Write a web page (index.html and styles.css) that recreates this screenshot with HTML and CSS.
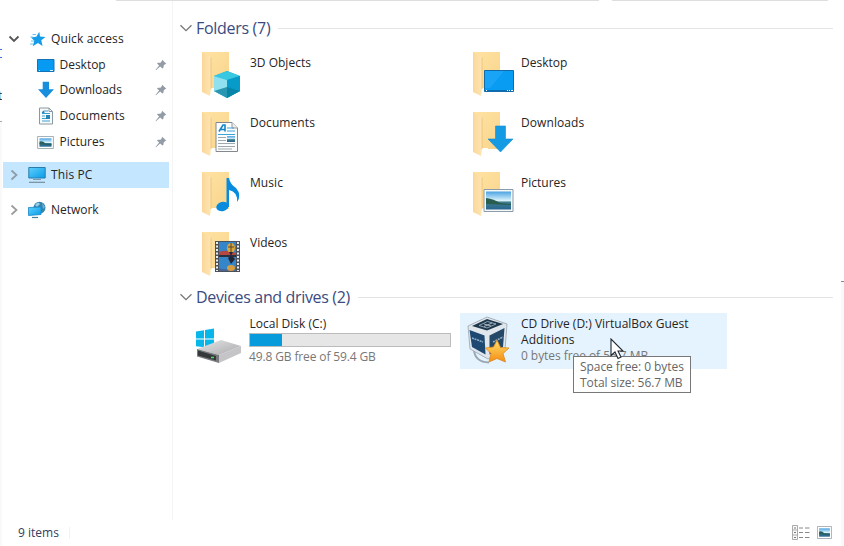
FILE: index.html
```html
<!DOCTYPE html>
<html lang="en">
<head>
<meta charset="utf-8">
<title>This PC</title>
<link rel="stylesheet" href="styles.css">
</head>
<body>
<svg class="defs" width="0" height="0" aria-hidden="true">
  <defs>
    <linearGradient id="gold" x1="0" y1="0" x2="1" y2="1"><stop offset="0" stop-color="#ffe3a4"/><stop offset="1" stop-color="#f8d48b"/></linearGradient>
    <linearGradient id="flap" x1="0" y1="0" x2="1" y2="0"><stop offset="0" stop-color="#fad798"/><stop offset="1" stop-color="#ffe5b4"/></linearGradient>
    <linearGradient id="sky" x1="0" y1="0" x2="0" y2="1"><stop offset="0" stop-color="#4ba3e3"/><stop offset=".5" stop-color="#d9f1fb"/><stop offset=".6" stop-color="#3f7c8e"/><stop offset="1" stop-color="#266492"/></linearGradient>
    <linearGradient id="screen" x1="0" y1="0" x2="1" y2="1"><stop offset="0" stop-color="#5fd0fb"/><stop offset="1" stop-color="#089bea"/></linearGradient>
    <linearGradient id="metal" x1="0" y1="0" x2="1" y2="1"><stop offset="0" stop-color="#e6e6e7"/><stop offset="1" stop-color="#aaaaae"/></linearGradient>
    <linearGradient id="star" x1="0" y1="0" x2="0" y2="1"><stop offset="0" stop-color="#ffe06a"/><stop offset="1" stop-color="#f58c13"/></linearGradient>
    <symbol id="folder" viewBox="0 0 48 48">
      <path d="M6 2H33V39H6Z" fill="url(#gold)"/>
      <path d="M14 38H21V43H14Z" fill="#fff"/>
      <path d="M6 2L15 7.500V39L14 46L6 42Z" fill="url(#flap)"/>
      <path d="M15 7.500V39" stroke="#eebf70" stroke-width=".8"/>
    </symbol>
    <symbol id="pin" viewBox="0 0 12 12"><path d="M7.200.8L11.300 4.700L10 5.300L8.700 6.400L8.300 9L7.500 9.600L5.100 7.400L1 11.300L.5 10.900L4.100 6.500L2 4.500L2.800 3.800L5.500 3.700L6.700 2.300Z" fill="#929ba6"/></symbol>
    <symbol id="picture" viewBox="0 0 18 14"><path d="M.5.500H17.500V13.500H.5Z" fill="#fff" stroke="#9ca7ae"/><path d="M2.500 2.500H15.500V11.500H2.500Z" fill="url(#sky)"/><path d="M2.500 6Q6 5 9 8L15.500 9V10L2.500 9Z" fill="#285f62"/></symbol>
  </defs>
</svg>

<div class="window">
  <div class="topline"><i></i><i></i></div>
  <div class="body">
    <nav class="sidebar">
      <div class="row root">
        <svg class="chev" viewBox="0 0 12 12"><path d="M1.500 3.500L6 8L10.500 3.500" fill="none" stroke="#555" stroke-width="1.800"/></svg>
        <svg class="ico" viewBox="0 0 18 18"><path d="M11.300 1.700L12 6.500L17.500 6.900L13.300 10.300L14.500 16L10 13L4.700 16.300L6.300 10.800L3 7.400L8.300 6.800Z" fill="#159ce8"/><path d="M4.500 4.500H8M2.500 7H5M3 11H6M2 14H5" stroke="#5abdf2" stroke-width=".9"/></svg>
        <span class="wide">Quick access</span>
      </div>
      <div class="row child">
        <svg class="ico" viewBox="0 0 18 18"><path d="M.5 3.500H17V15.500H.5Z" fill="#079af2" stroke="#1672b6"/><path d="M2 14.500H3M13 14.500H16" stroke="#d1f2ff"/></svg>
        <span>Desktop</span><svg class="pin"><use href="#pin"/></svg>
      </div>
      <div class="row child">
        <svg class="ico" viewBox="0 0 18 18"><path d="M5.700.8H12V8.200H17L9 17L1 8.200H5.700Z" fill="#178fdd"/></svg>
        <span>Downloads</span><svg class="pin"><use href="#pin"/></svg>
      </div>
      <div class="row child">
        <svg class="ico" viewBox="0 0 18 18"><path d="M2.500 1H12L15.500 4.500V17H2.500Z" fill="#f8fbfd" stroke="#8a989f"/><path d="M12 1V4.500H15.500" fill="none" stroke="#8a989f"/><path d="M8 4H11M5 6.500H13M5 9H8M5 11.500H13M5 14H13" stroke="#3c9fd4" stroke-width="1.100"/><path d="M5 5L7.500 3V6H5ZM9 8H13V12H9Z" fill="#2782b6"/></svg>
        <span class="wide">Documents</span><svg class="pin"><use href="#pin"/></svg>
      </div>
      <div class="row child">
        <svg class="ico" viewBox="0 0 18 18"><use href="#picture" y="3" width="17" height="13"/></svg>
        <span>Pictures</span><svg class="pin"><use href="#pin"/></svg>
      </div>
      <div class="row root selected">
        <svg class="chev" viewBox="0 0 12 12"><path d="M3.500 1.500L8.500 6L3.500 10.500" fill="none" stroke="#8d9ba7" stroke-width="1.700"/></svg>
        <svg class="ico" viewBox="0 0 18 18"><path d="M.8 1.500H17.200V12H.8Z" fill="url(#screen)" stroke="#287dac"/><path d="M5 13.500H13" stroke="#7d9aab"/><path d="M1 16.300H17" stroke="#778e9d" stroke-width="1.200"/></svg>
        <span class="wide">This PC</span>
      </div>
      <div class="row root network">
        <svg class="chev" viewBox="0 0 12 12"><path d="M3.500 1.500L8.500 6L3.500 10.500" fill="none" stroke="#9b9b9b" stroke-width="1.700"/></svg>
        <svg class="ico" viewBox="0 0 18 18"><circle cx="11.500" cy="6.700" r="6" fill="#3483ae"/><path d="M7 4Q10 0 12 3L9 6Z" fill="#95cee4"/><path d="M14 2L17 6L15 8Z" fill="#6cb4d2"/><path d="M.5 6.500L13 6V13.500L.5 14.500Z" fill="url(#screen)" stroke="#1688c4" stroke-width=".8"/><path d="M4 16.500H10" stroke="#467f9b" stroke-width="1.200"/></svg>
        <span>Network</span>
      </div>
    </nav>

    <main class="content">
      <h2 class="group"><svg class="down" viewBox="0 0 12 8"><path d="M.5 1.200L6 6.700L11.500 1.200" fill="none" stroke="#777" stroke-width="1.300"/></svg><span class="g1">Folders (7)</span><i></i></h2>
      <section class="folders">
        <div class="tile"><svg class="big" viewBox="0 0 48 48"><use href="#folder"/><path d="M31 21L44 26V41L31 48L18 41V26Z" fill="#16aacb"/><path d="M18 26L31 21L44 26L31 30Z" fill="#38c8e2"/><path d="M18 26L31 30V48L18 41Z" fill="#90e0ef"/><path d="M31 30L44 26V41L31 48Z" fill="#079bc9"/><path d="M18 41L31 37L44 41L31 48Z" fill="#087d9e" opacity=".75"/></svg><span>3D Objects</span></div>
        <div class="tile"><svg class="big" viewBox="0 0 48 48"><use href="#folder"/><path d="M17.500 20.500H46.500V41.500H17.500Z" fill="#089cf3" stroke="#136aa9"/><path d="M18 21H37L23 38H18Z" fill="#26aafa" opacity=".6"/><path d="M18 40.500H46" stroke="#086eb5"/><path d="M19 40.500H20M40 40.500H41M42 40.500H43M44 40.500H46" stroke="#fff"/></svg><span>Desktop</span></div>
        <div class="tile"><svg class="big" viewBox="0 0 48 48"><use href="#folder"/><path d="M20 12.500H36L41.500 18V41.500H20Z" fill="#fbfcfd" stroke="#85898c"/><path d="M36 12.500V18H41.500" fill="#eee" stroke="#999"/><path d="M23 21.500L27 15L29 15L29 21.500M24.500 19.500H29" fill="none" stroke="#1684c7" stroke-width="1.600"/><path d="M31 18H38M31 21H39M22 24.500H39" stroke="#3ca5d8" stroke-width="1.100"/><path d="M22 27.500H30M22 30.500H30M22 33.500H39M22 36.500H39M22 39H36" stroke="#a1a8ae"/><path d="M31 26H39V32H31Z" fill="url(#sky)"/></svg><span class="wide">Documents</span></div>
        <div class="tile"><svg class="big" viewBox="0 0 48 48"><use href="#folder"/><path d="M28.500 16H38.500V29H46L33.500 42L21 29H28.500Z" fill="#159be4" stroke="#178bd2" stroke-width=".6"/></svg><span class="wide">Downloads</span></div>
        <div class="tile"><svg class="big" viewBox="0 0 48 48"><use href="#folder"/><ellipse cx="26.500" cy="36.500" rx="6.300" ry="4.700" transform="rotate(-15 26.500 36.500)" fill="#078bdf"/><path d="M30.500 8H33Q34 14 40 18Q46 25 41 32Q42 22 33 20V37H30.500Z" fill="#078bdf"/></svg><span class="wide">Music</span></div>
        <div class="tile"><svg class="big" viewBox="0 0 48 48"><use href="#folder"/><path d="M17 19.500H46V41.500H17Z" fill="#f8f8f6" stroke="#8a9bab"/><path d="M19 21.500H44V39.500H19Z" fill="url(#sky)"/><path d="M19 28Q27 29 33 33L44 34V35L19 34Z" fill="#285d50"/></svg><span>Pictures</span></div>
        <div class="tile"><svg class="big" viewBox="0 0 48 48"><use href="#folder"/><path d="M19 11H44V42H19Z" fill="#4b525c"/><path d="M23 12H40V25H23ZM23 27H40V41H23Z" fill="#3585c9"/><path d="M23 22Q30 19 40 23V25H23Z" fill="#b54845"/><path d="M23 38Q30 41 40 37V41H23Z" fill="#48659a"/><ellipse cx="35" cy="18" rx="4" ry="5" fill="#d9a83b"/><path d="M32 17H38M35 13V23" stroke="#5b4230"/><path d="M23 26H40" stroke="#202833" stroke-width="1.500"/><path d="M33 22H37L35 26ZM32 28Q36 24 39 29L35 34Z" fill="#252534"/><ellipse cx="35" cy="38" rx="4" ry="3" fill="#d69e3e"/><path d="M21 12V41M42 12V41" stroke="#e9edf0" stroke-width="2" stroke-dasharray="2 1.500"/></svg><span>Videos</span></div>
      </section>

      <h2 class="group devices"><svg class="down" viewBox="0 0 12 8"><path d="M.5 1.200L6 6.700L11.500 1.200" fill="none" stroke="#777" stroke-width="1.300"/></svg><span class="g2">Devices and drives (2)</span><i></i></h2>
      <section class="drives">
        <div class="drive">
          <svg class="big" viewBox="0 0 48 48"><path d="M0 15.500L8 14.200V22.500H0ZM9 14L18 12.500V22.500H9ZM0 23.500H8V31.300L0 30.300ZM9 23.500H18V32.500L9 31.500Z" fill="#08b7ea"/><path d="M1 33L25 24L45 30L23 39Z" fill="url(#metal)"/><path d="M1 33L23 39V47L1 40.500Z" fill="#77797c"/><path d="M2 34.500L20 40V44.500L2 39.500Z" fill="#34383a"/><path d="M23 39L45 30V37L23 47Z" fill="#c5c5c8"/><path d="M15 41.500H18" stroke="#49e160" stroke-width="1.500"/></svg>
          <div class="info"><span class="name">Local Disk (C:)</span><div class="meter"><b></b></div><span class="sub tight">49.8 GB free of 59.4 GB</span></div>
        </div>
        <div class="drive hover">
          <svg class="big" viewBox="0 0 48 48"><path d="M7 34Q8 46 22 46.500" fill="none" stroke="#9aa8b6" stroke-width="2"/><path d="M1 10L20 1L40 8L38 34L21 43L3 33Z" fill="#dfe6ec" stroke="#98a3ad" stroke-width=".8"/><path d="M5 10L20 3L36 8L20 14.500Z" fill="#20384c"/><path d="M12 9.500L20.500 5.500L29 8L20 12Z" fill="none" stroke="#a9bdca" stroke-width=".8"/><path d="M17 8L24 10M17 10.500L25 7" stroke="#c2d0d9" stroke-width=".8"/><path d="M2.500 14L17.500 19.500L18.500 38.500L5 31Z" fill="#1e4772"/><path d="M22.500 19.500L37.500 12L36 31L22.500 38.500Z" fill="#244868"/><path d="M5 22L16 26M26 26L36 21" stroke="#8faec5" stroke-width="1.600" stroke-dasharray="2 .7"/><path d="M30 24L33.500 31.500L42 32L36 37.500L38.500 46L30 42.500L22 46L24 37.500L18.500 32L26.500 31Z" fill="url(#star)" stroke="#df861c" stroke-width=".8"/></svg>
          <div class="info"><span class="name">CD Drive (D:) VirtualBox Guest</span><span class="name wide">Additions</span><span class="sub bytes">0 bytes free of 56.7 MB</span></div>
        </div>
      </section>
    </main>
  </div>
  <footer class="status"><span>9 items</span><i></i>
    <svg class="details" viewBox="0 0 18 15"><path d="M.5.500H5.500V14.500H.5ZM.5 5H5.500M.5 10H5.500" fill="#fafafa" stroke="#aaa"/><path d="M2 3H4M2 7.500H4M2 12.500H4" stroke="#777"/><path d="M7 3H11M13 3H17.500M7 7.500H11M13 7.500H17.500M7 12.500H11M13 12.500H17.500" stroke="#888"/></svg>
    <svg class="large" viewBox="0 0 18 14" preserveAspectRatio="none"><use href="#picture"/></svg>
  </footer>
  <div class="edge left"></div><div class="edge right"></div>
  <div class="peek blue"></div><div class="peek dark">t</div>
  <div class="tooltip"><span>Space free: 0 bytes</span><span>Total size: 56.7 MB</span></div>
  <svg class="cursor" viewBox="0 0 14 22"><path d="M1 1V17.500L5 14L8 20.500L11 19L8 13H13Z" fill="#fff" stroke="#202830" stroke-width="1.100"/></svg>
</div>
</body>
</html>
```
FILE: styles.css
```css
* { box-sizing: border-box; }
body { margin: 0; background: #fff; font: 12px/16px "Open Sans", "Noto Sans", sans-serif; color: #252525; overflow: hidden; }
span { white-space: nowrap; }
svg { display: block; flex: none; }
.defs { position: absolute; }
.window { position: relative; width: 844px; height: 546px; display: flex; flex-direction: column; overflow: hidden; }
.topline { height: 1px; display: flex; gap: 13px; padding-left: 116px; }
.topline i { background: #dedede; width: 483px; }
.topline i + i { width: 216px; }
.body { display: flex; height: 519px; }
.sidebar { width: 173px; padding: 25px 3px 0; border-right: 1px solid #f4f4f4; }
.row { display: flex; align-items: center; height: 25.700px; }
.row span { letter-spacing: -.02px; }
.row .wide { letter-spacing: .13px; }
.tile .wide, .info .wide { letter-spacing: .08px; }
.root { padding-left: 5px; }
.chev { width: 12px; height: 12px; margin-right: 8px; }
.ico { width: 18px; height: 18px; margin-right: 5px; }
.child { padding-left: 34px; }
.child .pin { margin-right: 2px; }
.child .ico { margin-right: 4.500px; }
.pin { width: 12px; height: 12px; margin-left: auto; }
.selected { margin-top: 8px; background: #c5e6ff; }
.network { margin-top: 9px; }
.content { width: 671px; padding: 18px 11px 0 7px; }
.group { display: flex; align-items: center; height: 18px; margin: 0; font-size: 16px; line-height: 18px; font-weight: 400; color: #3b4b80; }
.g1 { letter-spacing: -.3px; }
.g2 { letter-spacing: -.34px; }
.down { width: 12px; height: 8px; margin-right: 4px; }
.group i { flex: 1; height: 1px; background: #e4e4e4; margin-left: 8px; }
.folders { display: grid; grid-template-columns: 271px 271px; grid-auto-rows: 60px; padding: 13px 0 0 16px; }
.tile { display: flex; }
.tile span { margin: 5px 0 0 6px; }
.big { width: 48px; height: 48px; }
.devices { margin-top: -2px; }
.drives { display: flex; padding: 7px 0 0 16px; gap: 10px; }
.drive { width: 254px; height: 56px; display: flex; padding-top: 3px; }
.info { display: flex; flex-direction: column; align-items: flex-start; margin-left: 5px; }
.info .name { padding-left: .500px; }
.drive.hover { width: 267px; padding-left: 7px; background: #e5f3ff; }
.hover .info { margin-left: 6px; }
.hover .info .name { padding-left: 0; }
.sub { color: #777; }
.tight { letter-spacing: -.13px; }
.bytes { letter-spacing: -.06px; }
.meter { width: 202px; height: 14px; margin: 1px 0 2px; border: 1px solid #bcbcbc; background: #e6e6e6; }
.meter b { display: block; width: 32px; height: 12px; background: #079bdc; }
.status { height: 26px; display: flex; align-items: center; padding: 0 12px 0 18px; color: #32405d; }
.status i { width: 1px; height: 12px; background: #f2f2f2; margin-left: 10px; }
.details { width: 18px; height: 15px; margin-left: auto; margin-right: 7px; position: relative; top: -1px; }
.large { width: 15px; height: 13px; position: relative; top: -1px; }
.edge { position: absolute; background: #f9f9f9; }
.left { left: 0; top: 121px; width: 2px; height: 425px; border-top: 1px solid #aaa; }
.right { right: 0; top: 281px; width: 3px; height: 265px; border-top: 1px solid #888; }
.peek { position: absolute; left: 0; width: 2px; overflow: hidden; }
.blue { top: 49px; height: 9px; border: solid #3978e2; border-width: 1px 0; }
.dark { top: 88px; height: 16px; text-indent: -2px; }
.tooltip { position: absolute; left: 573px; top: 356px; width: 118px; height: 37px; border: 1px solid #777; background: #fff; color: #666; padding: 2px 6px; display: flex; flex-direction: column; align-items: flex-start; letter-spacing: -.06px; }
.cursor { position: absolute; left: 610px; top: 338px; width: 14px; height: 22px; }
```
